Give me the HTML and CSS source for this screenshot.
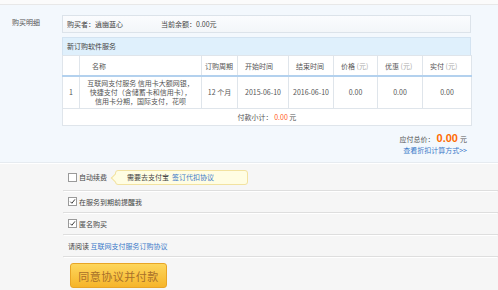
FILE: index.html
```html
<!DOCTYPE html>
<html lang="zh-CN">
<head>
<meta charset="utf-8">
<title>购买明细</title>
<link rel="stylesheet" href="styles.css">
</head>
<body>
<div class="topbar"></div>
<section class="detail">
  <div class="label">购买明细</div>
  <div class="content">
    <div class="buyer">
      <span class="buyer-name">购买者：逍幽蓝心</span>
      <span class="balance">当前余额：0.00元</span>
    </div>
    <div class="svc-head">新订购软件服务</div>
    <table class="orders">
      <colgroup>
        <col class="c-no">
        <col class="c-name">
        <col class="c-period">
        <col class="c-start">
        <col class="c-end">
        <col class="c-price">
        <col class="c-disc">
        <col class="c-pay">
      </colgroup>
      <thead>
        <tr>
          <th></th>
          <th class="h-name">名称</th>
          <th class="h-period">订购周期</th>
          <th>开始时间</th>
          <th>结束时间</th>
          <th>价格 <span class="unit">(元)</span></th>
          <th>优惠 <span class="unit">(元)</span></th>
          <th>实付 <span class="unit">(元)</span></th>
        </tr>
      </thead>
      <tbody>
        <tr class="item">
          <td>1</td>
          <td class="name">互联网支付服务 信用卡大额网银，<br>快捷支付（含储蓄卡和信用卡），<br>信用卡分期，国际支付，花呗</td>
          <td>12 个月</td>
          <td>2015-06-10</td>
          <td>2016-06-10</td>
          <td>0.00</td>
          <td>0.00</td>
          <td>0.00</td>
        </tr>
        <tr class="subtotal">
          <td colspan="8">付款小计： <span class="red">0.00</span> 元</td>
        </tr>
      </tbody>
    </table>
    <div class="total">
      <div class="sum">应付总价： <span class="big">0.00</span> 元</div>
      <a class="link" href="#">查看折扣计算方式&gt;&gt;</a>
    </div>
  </div>
</section>
<section class="options">
  <div class="opt opt-renew">
    <label class="check"><span class="box"></span>自动续费</label>
    <div class="tip">需要去支付宝 <a class="link" href="#">签订代扣协议</a></div>
  </div>
  <div class="opt">
    <label class="check"><span class="box on"><svg viewBox="0 0 8 8" width="8" height="8"><path d="M1.5 4.2 L3.3 6 L6.8 1.6" fill="none" stroke="#333" stroke-width="1.1"/></svg></span>在服务到期前提醒我</label>
  </div>
  <div class="opt">
    <label class="check"><span class="box on"><svg viewBox="0 0 8 8" width="8" height="8"><path d="M1.5 4.2 L3.3 6 L6.8 1.6" fill="none" stroke="#333" stroke-width="1.1"/></svg></span>匿名购买</label>
  </div>
  <div class="opt">
    <span>请阅读 <a class="link" href="#">互联网支付服务订购协议</a></span>
  </div>
  <div class="btn-row">
    <button class="pay-btn" type="button">同意协议并付款</button>
  </div>
</section>
</body>
</html>
```
FILE: styles.css
```css
html, body {
  margin: 0;
  padding: 0;
}
body {
  width: 498px;
  height: 290px;
  overflow: hidden;
  background: #f6f6f6;
  font-family: "Noto Sans CJK SC", "Noto Sans", sans-serif;
  font-size: 7px;
  color: #444;
}
a {
  text-decoration: none;
}
.link {
  color: #3a78c8;
}
.topbar {
  height: 4px;
  background: #fbfbfb;
  border-bottom: 1px solid #e8e8e8;
}
.detail {
  display: flex;
  background: #f3f8fd;
  height: 158px;
  box-sizing: border-box;
  border-bottom: 1px solid #e6ebf0;
}
.label {
  width: 62px;
  box-sizing: border-box;
  padding: 12px 0 0 12px;
  color: #555;
}
.content {
  width: 409px;
  padding-top: 10px;
}
.buyer {
  height: 16px;
  border: 1px solid #dce3ea;
  background: linear-gradient(#fbfcfe, #f3f6f9);
  display: flex;
  align-items: center;
  padding-left: 4px;
}
.buyer-name {
  width: 94px;
}
.svc-head {
  margin-top: 4px;
  height: 17px;
  line-height: 17px;
  border: 1px solid #d3e3f1;
  border-bottom: none;
  background: #dff0fc;
  padding-left: 4px;
}
.orders {
  width: 409px;
  border-collapse: collapse;
  background: #fff;
  table-layout: fixed;
}
.c-no { width: 17px; }
.c-name { width: 122px; }
.c-period { width: 36px; }
.c-start { width: 51px; }
.c-end { width: 45px; }
.c-price { width: 44px; }
.c-disc { width: 45px; }
.c-pay { width: 49px; }
.orders th, .orders td {
  border: 1px solid #dfe5eb;
  padding: 0;
  font-weight: normal;
  white-space: nowrap;
  overflow: hidden;
}
.orders th {
  height: 19px;
  text-align: left;
  padding-left: 7px;
  border-bottom: 2px solid #b3d1ee;
  color: #555;
}
.orders th.h-name {
  padding-left: 12px;
}
.orders th.h-period {
  padding-left: 3px;
}
.orders .unit {
  color: #aaa;
}
.orders td {
  text-align: center;
  color: #555;
}
.item td {
  height: 31px;
  line-height: 9px;
}
.subtotal td {
  height: 16px;
}
.red {
  color: #ff5a1a;
}
.total {
  display: flex;
  flex-direction: column;
  align-items: flex-end;
  padding: 6px 4px 0 0;
}
.sum {
  color: #555;
  display: flex;
  align-items: baseline;
  gap: 2px;
}
.big {
  color: #ff6a00;
  font-size: 11px;
  font-weight: bold;
  font-family: "Liberation Sans", Arial, sans-serif;
}
.total .link {
  margin-top: 1px;
}
.options {
  padding-left: 63px;
  border-top: 1px solid #fff;
}
.opt {
  display: flex;
  align-items: center;
  height: 21px;
  padding-left: 5px;
  border-bottom: 1px solid #dedede;
  box-shadow: 0 2px 0 -1px #ffffff;
  color: #444;
}
.opt-renew {
  height: 26px;
}
.check {
  display: flex;
  align-items: center;
  gap: 1px;
}
.box {
  width: 7px;
  height: 7px;
  border: 1px solid #9a9a9a;
  background: #fff;
  margin-right: 1px;
  display: flex;
  align-items: center;
  justify-content: center;
}
.box svg {
  display: block;
  width: 7px;
  height: 7px;
}
.tip {
  position: relative;
  margin-left: 8px;
  height: 15px;
  width: 133px;
  box-sizing: border-box;
  padding-left: 11px;
  display: flex;
  align-items: center;
  gap: 3px;
  background: #fffde3;
  border: 1px solid #f2e2a0;
  border-radius: 3px;
  color: #444;
}
.tip::before {
  content: "";
  position: absolute;
  left: -4px;
  top: 4px;
  width: 5px;
  height: 5px;
  background: #fffde3;
  border-left: 1px solid #f2e2a0;
  border-bottom: 1px solid #f2e2a0;
  transform: rotate(45deg);
}
.btn-row {
  padding: 6px 0 0 7px;
}
.pay-btn {
  width: 97px;
  height: 25px;
  border: 1px solid #e8a526;
  border-radius: 3px;
  background: linear-gradient(#fdd65c, #f6b52a);
  color: #a8702a;
  font-family: "Noto Sans CJK SC", sans-serif;
  font-size: 11px;
  padding: 0;
  letter-spacing: 0.5px;
}
```
